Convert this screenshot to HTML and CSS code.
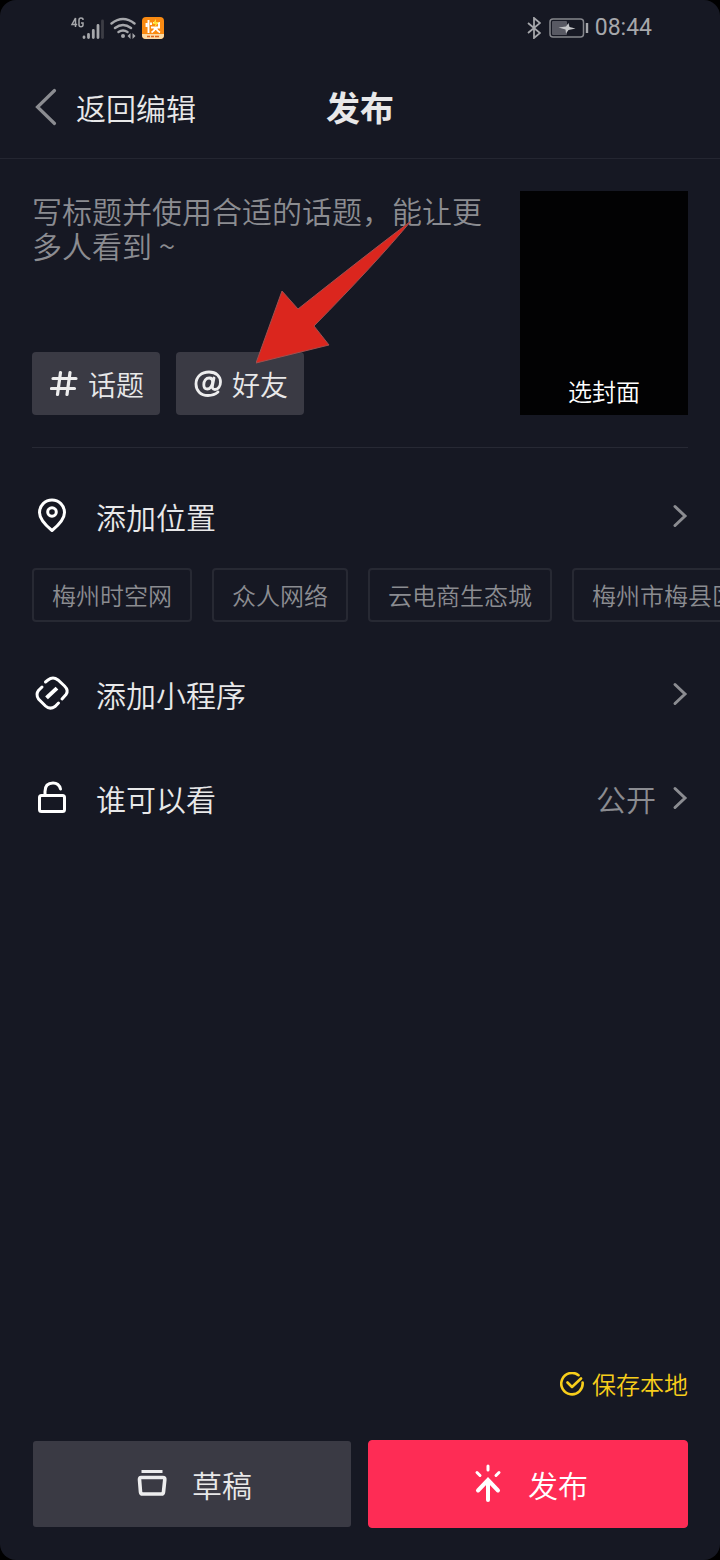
FILE: index.html
```html
<!DOCTYPE html>
<html lang="zh-CN">
<head>
<meta charset="utf-8">
<meta name="viewport" content="width=device-width, initial-scale=1">
<title>发布</title>
<link rel="stylesheet" href="styles.css">
</head>
<body>
<div class="screen">
  <div class="status">
    <div class="status-group">
      <svg class="signal" viewBox="0 0 34 26" aria-hidden="true">
        <g fill="none" stroke="#a6a7ab" stroke-width="1.5">
          <path d="M5.500 12V3L2 9.500h5.200M13 5V4.500Q13 3 11 3T9 5v5q0 1.700 2 1.700t2-1.700V8h-2"/>
        </g>
        <g stroke="#a6a7ab" stroke-width="2.800" stroke-linecap="round">
          <path d="M14 22v.500M18.500 19.500V22.500M23.300 15.500v7M28 10.500v12"/>
          <path d="M32.500 6v16.500" stroke="#3c3d45"/>
        </g>
      </svg>
      <svg class="wifi" viewBox="0 0 26 22" aria-hidden="true">
        <g fill="none" stroke="#a6a7ab" stroke-width="2.400" stroke-linecap="round">
          <path d="M1.500 6.500Q13-2.500 24.500 6.500M5 11q8-6 16 0M8.500 15q4.500-3 9 0"/>
        </g>
        <circle cx="13" cy="19" r="2" fill="#a6a7ab"/>
        <path d="M20.500 16v6l-3-3zM22.500 16v6l3-3z" fill="#a6a7ab"/>
      </svg>
      <svg class="app" viewBox="0 0 22 22" aria-hidden="true">
        <rect width="22" height="22" rx="4" fill="#f98a12"/>
        <path d="M0 17h22v1a4 4 0 0 1-4 4H4a4 4 0 0 1-4-4z" fill="#fbd9a4"/>
        <path d="M6.500 3v13M4.500 6v4M9 5.500v2.500M9 10.500h9M11 6h6v4.500M13.500 10.500q-1 3.500-4 5M14 11q1 3 4 4.500" fill="none" stroke="#fff" stroke-width="1.900"/>
        <path d="M14 2l-3.500 5h3l-1 3.500 4.500-5.500h-3z" fill="#ffe13b"/>
        <path d="M5 19.500h3M9 19.500h3M13 19.500h4" stroke="#e0661a" stroke-width="1.600"/>
      </svg>
    </div>
    <div class="status-group">
      <svg class="bluetooth" viewBox="0 0 14 22" aria-hidden="true">
        <path d="M1 6l12 10-6 5V1l6 5L1 16" fill="none" stroke="#a6a7ab" stroke-width="1.800"/>
      </svg>
      <svg class="battery" viewBox="0 0 40 20" aria-hidden="true">
        <rect x="1" y="1" width="33.500" height="18" rx="3" fill="none" stroke="#85868c" stroke-width="1.500"/>
        <rect x="3" y="3" width="15" height="14" rx="1" fill="#585963"/>
        <path d="M9.500 9.500L17 8.500 19.500 5l1 4 6 1.500-7 1.500-2.500 3.500-.500-4z" fill="#c4c5c8"/>
        <path d="M38 5v10" stroke="#a6a7ab" stroke-width="2.400"/>
      </svg>
      <span class="clock">08:44</span>
    </div>
  </div>

  <header class="nav">
    <button class="back" type="button">
      <svg class="back-icon" viewBox="0 0 22 38" aria-hidden="true"><path d="M19.500 2.500L2.500 19l17 16.500" fill="none" stroke="#8b8c91" stroke-width="3.200" stroke-linecap="round"/></svg>
      <span>返回编辑</span>
    </button>
    <h1 class="title">发布</h1>
  </header>

  <main class="main">
    <section class="composer">
      <div class="compose-text">
        <textarea class="caption" aria-label="标题" placeholder="写标题并使用合适的话题，能让更多人看到 ~"></textarea>
        <div class="tags">
          <button class="tag" type="button">
            <svg class="tag-icon" viewBox="0 0 28 28" aria-hidden="true"><path d="M10.500 2.500L7.500 24.500M20 2.500L17 24.500M3 8.500h23M1.500 18.500h23" fill="none" stroke="#ededee" stroke-width="3.200" stroke-linecap="round"/></svg>
            <span>话题</span>
          </button>
          <button class="tag" type="button">
            <svg class="tag-icon" viewBox="0 0 28 28" aria-hidden="true">
              <g fill="none" stroke="#ededee" stroke-width="2.800" stroke-linecap="round">
                <path d="M24 22Q20 25.500 14 25.500C6.500 25.500 2 20.500 2 14 2 6.500 7.500 2 15 2s11.500 4.500 11.500 10c0 4.500-2.500 7.500-5.500 7.500-2.500 0-3-1.500-2.500-4L20 8"/>
                <path d="M18.700 12c0-2.500-1.200-4-3.400-4-3.300 0-5.500 3-5.500 6.700 0 2.800 1.200 4.300 3.500 4.300 2.700 0 4.700-2.500 5.400-7z"/>
              </g>
            </svg>
            <span>好友</span>
          </button>
        </div>
      </div>
      <button class="cover" type="button">选封面</button>
      <svg class="pointer" viewBox="0 0 156 144" aria-hidden="true"><path d="M0 143L26 71 42 89Q110 35 155 1 120 43 58 106L73 125Z" fill="#db261e" stroke="#a0504f" stroke-width="1"/></svg>
    </section>

    <section class="options">
      <button class="row" type="button">
        <svg class="row-icon" viewBox="0 0 40 40" aria-hidden="true">
          <g fill="none" stroke="#fff" stroke-width="3"><path d="M20 34.500C12 28 7.500 22.500 7.500 16.500a12.500 12.500 0 0 1 25 0c0 6-4.500 11.500-12.500 18z" stroke-linejoin="round"/><circle cx="20" cy="16" r="4.300"/></g>
        </svg>
        <span class="row-label">添加位置</span>
        <svg class="chevron" viewBox="0 0 16 24" aria-hidden="true"><path d="M3 2.500L13 12 3 21.500" fill="none" stroke="#8b8c91" stroke-width="3" stroke-linecap="round"/></svg>
      </button>
      <div class="places">
        <button class="place" type="button">梅州时空网</button>
        <button class="place" type="button">众人网络</button>
        <button class="place" type="button">云电商生态城</button>
        <button class="place" type="button">梅州市梅县区</button>
      </div>
      <button class="row" type="button">
        <svg class="row-icon" viewBox="0 0 40 40" aria-hidden="true">
          <g fill="none" stroke="#fff" stroke-width="3" stroke-linecap="round">
            <path d="M13.500 8l2.500-2Q21 2 26 6l6.500 6Q37 16.500 34 20.500l-4 4.500"/>
            <path d="M10 13L6.500 16.500Q3.500 20.500 6.500 25l7 7q4.500 4 9.500.500l3.500-3.500"/>
          </g>
          <path d="M16 22.500l7.500-7" stroke="#fff" stroke-width="4" stroke-linecap="square" fill="none"/>
        </svg>
        <span class="row-label">添加小程序</span>
        <svg class="chevron" viewBox="0 0 16 24" aria-hidden="true"><path d="M3 2.500L13 12 3 21.500" fill="none" stroke="#8b8c91" stroke-width="3" stroke-linecap="round"/></svg>
      </button>
      <button class="row" type="button">
        <svg class="row-icon" viewBox="0 0 40 40" aria-hidden="true">
          <g fill="none" stroke="#fff" stroke-width="3"><rect x="7.500" y="17.500" width="25" height="16" rx="2"/><path d="M13 17.500v-4q0-8.500 8-8.500 6 0 7.500 6" stroke-linecap="round"/></g>
        </svg>
        <span class="row-label">谁可以看</span>
        <span class="row-value">公开</span>
        <svg class="chevron" viewBox="0 0 16 24" aria-hidden="true"><path d="M3 2.500L13 12 3 21.500" fill="none" stroke="#8b8c91" stroke-width="3" stroke-linecap="round"/></svg>
      </button>
    </section>
  </main>

  <footer class="footer">
    <label class="save">
      <input class="save-input" type="checkbox" checked>
      <svg class="save-icon" viewBox="0 0 24 24" aria-hidden="true"><path d="M18.500 3.200A10.700 10.700 0 1 0 22.600 10.500M7.500 10.500l4.500 4.500 9-8.500" fill="none" stroke="#f8ce1b" stroke-width="2.600" stroke-linecap="round" stroke-linejoin="round"/></svg>
      <span>保存本地</span>
    </label>
    <div class="actions">
      <button class="action draft" type="button">
        <svg class="action-icon" viewBox="0 0 40 40" aria-hidden="true"><g fill="none" stroke="#ededee" stroke-linejoin="round"><path d="M9.500 7.500h21" stroke-width="3"/><path d="M9 13.500h22q2 0 1.800 2L31.500 28q-.200 2-2.200 2H10.700Q8.700 30 8.500 28L7.500 15.500q0-2 1.500-2z" stroke-width="3.600"/></g></svg>
        <span>草稿</span>
      </button>
      <button class="action publish" type="button">
        <svg class="action-icon" viewBox="0 0 40 40" aria-hidden="true"><g fill="none" stroke="#fff" stroke-linecap="round"><path d="M20 36V16M10 26.500L20 16l10 10.500" stroke-width="4"/><path d="M20 2v4M9 8.500l3 3M31 8.500l-3 3" stroke-width="3"/></g></svg>
        <span>发布</span>
      </button>
    </div>
  </footer>
</div>
</body>
</html>
```
FILE: styles.css
```css
* { box-sizing: border-box; }

body {
  margin: 0;
  background: #000;
  color: #e8e8e9;
  font-family: "Noto Sans CJK SC", Roboto, sans-serif;
  font-weight: 350;
}

button, textarea {
  margin: 0;
  padding: 0;
  border: 0;
  background: none;
  color: inherit;
  font: inherit;
}

svg { display: block; flex: none; }

.screen {
  display: flex;
  flex-direction: column;
  min-height: 100vh;
  border-radius: 16px;
  background: #161823;
  overflow: hidden;
}

.status {
  display: flex;
  align-items: center;
  justify-content: space-between;
  height: 56px;
  padding: 0 68px 0 70px;
}

.status-group { display: flex; align-items: center; gap: 6px; }
.signal { width: 34px; height: 26px; }
.wifi { width: 26px; height: 22px; }
.app { width: 22px; height: 22px; }
.bluetooth { width: 14px; height: 22px; margin-right: 2px; }
.battery { width: 40px; height: 20px; }
.clock { color: #a6a7ab; font-family: Roboto, sans-serif; font-size: 23px; line-height: 28px; font-weight: 400; }

.nav {
  display: grid;
  grid-template-columns: 1fr auto 1fr;
  align-items: center;
  height: 103px;
  padding: 0 32px;
  border-bottom: 1px solid #242631;
}

.back {
  display: flex;
  align-items: center;
  justify-self: start;
  gap: 19px;
  padding-left: 3px;
  font-size: 30px;
  line-height: 44px;
}

.back-icon { width: 22px; height: 38px; }
.title { margin: 0; font-size: 34px; line-height: 48px; font-weight: 700; }
.main { flex: 1; }

.composer {
  position: relative;
  display: flex;
  justify-content: space-between;
  gap: 24px;
  margin: 0 32px;
  padding: 32px 0;
  border-bottom: 1px solid #272934;
}

.compose-text { display: flex; flex: 1; flex-direction: column; }

.caption {
  flex: 1;
  width: 100%;
  padding-top: 2px;
  font-size: 30px;
  line-height: 35px;
  resize: none;
  outline: 0;
  overflow: hidden;
}

.caption::placeholder { color: #8b8c91; opacity: 1; }
.tags { display: flex; gap: 16px; }

.tag {
  display: flex;
  align-items: center;
  gap: 10px;
  height: 63px;
  padding: 0 16px 0 18px;
  border-radius: 4px;
  background: #3a3a44;
  font-size: 28px;
  line-height: 40px;
}

.tag-icon { width: 28px; height: 28px; }

.cover {
  display: flex;
  align-items: flex-end;
  justify-content: center;
  width: 168px;
  height: 224px;
  padding-bottom: 7px;
  background: #020203;
  color: #fff;
  font-size: 24px;
  line-height: 34px;
}

/* Hint arrow laid over the caption, aimed at the friends button */
.pointer {
  position: absolute;
  top: 61px;
  left: 224px;
  width: 156px;
  height: 144px;
  pointer-events: none;
}

.options { padding-top: 16px; }

.row {
  display: flex;
  align-items: center;
  width: 100%;
  height: 104px;
  padding: 0 32px;
  font-size: 30px;
  line-height: 44px;
  text-align: left;
}

.row-icon { width: 40px; height: 40px; margin-right: 24px; }
.row-label { flex: 1; }
.row-value { margin-right: 16px; color: #8b8c91; }
.chevron { width: 16px; height: 24px; }

.places {
  display: flex;
  gap: 20px;
  padding: 0 32px;
  margin-bottom: 20px;
  overflow: hidden;
}

.place {
  flex: none;
  height: 54px;
  padding: 0 18px;
  border: 2px solid #272933;
  border-radius: 4px;
  color: #8b8c91;
  font-size: 24px;
  line-height: 34px;
}

.footer { padding: 0 32px 32px; }

.save {
  position: relative;
  display: flex;
  align-items: center;
  justify-content: flex-end;
  gap: 8px;
  margin-bottom: 38px;
  color: #f8ce1b;
  font-size: 24px;
  line-height: 36px;
}

.save-input { position: absolute; right: 0; margin: 0; opacity: 0; }
.save-icon { width: 24px; height: 24px; }
.actions { display: flex; gap: 16px; }

.action {
  display: flex;
  flex: 1;
  align-items: center;
  justify-content: center;
  gap: 20px;
  height: 88px;
  border: 1px solid transparent;
  border-radius: 4px;
  font-size: 30px;
  line-height: 44px;
}

.action-icon { width: 40px; height: 40px; }
.draft { background: #3a3a44 padding-box; }
.publish { border-color: #fe2c55; background: #fe2c55; color: #fff; }
```
